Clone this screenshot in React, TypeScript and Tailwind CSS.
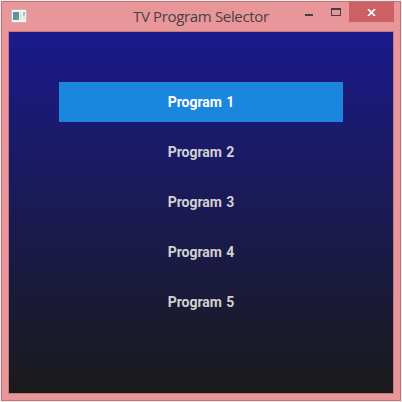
const programs = ["Program 1", "Program 2", "Program 3", "Program 4", "Program 5"];

function AppIcon() {
  return (
    <svg width="16" height="14" viewBox="0 0 16 14" shapeRendering="crispEdges">
      <defs>
        <linearGradient id="pane" x1="0" y1="0" x2="1" y2="1">
          <stop offset="0" stopColor="#5c88b8" />
          <stop offset="0.5" stopColor="#4f9a98" />
          <stop offset="1" stopColor="#68ae7c" />
        </linearGradient>
      </defs>
      <rect x="0.5" y="0.5" width="15" height="13" fill="#f4f3f3" stroke="#c9b4b7" />
      <rect x="2" y="3" width="6" height="8" fill="url(#pane)" />
      <rect x="9" y="3" width="2" height="8" fill="#e2e2e0" />
      <rect x="12" y="3" width="2" height="2" fill="#9bbcd0" />
      <rect x="12" y="5" width="2" height="2" fill="#a4cdb8" />
      <rect x="12" y="7" width="2" height="4" fill="#e6e6e4" />
    </svg>
  );
}

export default function App() {
  return (
    <div className="h-[402px] w-[402px] overflow-hidden bg-[#f3e9e8] p-px">
      <div className="flex h-[400px] w-[400px] flex-col border border-[#b87579] bg-[#e89699] px-[6px] pb-[6px]">
        <header className="flex h-[29px] items-start">
          <div className="ml-[3px] mt-[7px] w-4">
            <AppIcon />
          </div>
          <h1 className="ml-[106px] mt-[4px] w-[160px] whitespace-nowrap font-['Open_Sans',sans-serif] text-[15px] leading-[20px] tracking-[-0.34px] text-[#494144]">
            TV Program Selector
          </h1>
          <button aria-label="Minimize" className="ml-[12px] mt-[12px] h-[2px] w-2 bg-[#414040]" />
          <button
            aria-label="Maximize"
            className="ml-[18px] mt-[6px] h-2 w-[10px] border border-t-2 border-[#414040]"
          />
          <button
            aria-label="Close"
            className="ml-2 flex h-5 w-[45px] shrink-0 items-center justify-center bg-[#cb6163]"
          >
            <svg width="9" height="7" viewBox="0 0 9 7" className="mt-px">
              <path d="M1 0 L8 7 M8 0 L1 7" stroke="#fff" strokeWidth="1.7" />
            </svg>
          </button>
        </header>
        <main className="h-[363px] w-[386px] border border-[#c47b80] bg-linear-to-b/srgb from-[#1a1a8c] to-[#1a1a1a] px-[50px] pt-[50px]">
          <ul className="flex flex-col gap-[10px] text-center font-['Roboto',sans-serif] text-[14px] font-bold">
            {programs.map((name, i) => (
              <li
                key={name}
                className={
                  i === 0
                    ? "h-10 bg-[#1a86dd] leading-[41px] tracking-[-0.05px] [word-spacing:1px] text-white"
                    : "h-10 leading-[41px] tracking-[-0.05px] [word-spacing:1px] text-[#d1d1d1]"
                }
              >
                {name}
              </li>
            ))}
          </ul>
        </main>
      </div>
    </div>
  );
}
